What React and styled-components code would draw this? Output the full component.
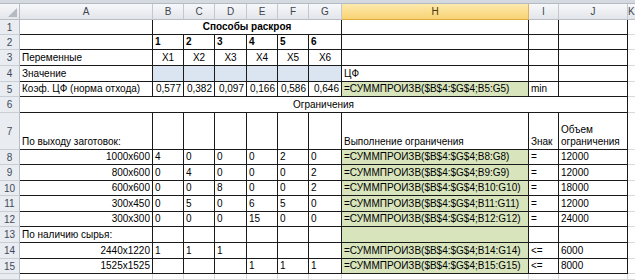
import React from 'react';
import styled, { createGlobalStyle, css } from 'styled-components';

const GlobalStyle = createGlobalStyle`
  html, body { margin: 0; padding: 0; background: #fff; }
  body {
    font-family: "Liberation Sans", Arial, sans-serif;
    font-size: 10px;
    color: #000;
    overflow: hidden;
  }
`;

// column widths (A..J) and row heights (1..15), measured off the sheet
const COLS = [133, 31, 31, 32, 31, 31, 33, 187, 30, 69];
const ROWS = [15, 15, 16, 16, 15, 16, 37, 15, 16, 15, 16, 15, 16, 16, 15];
const LETTERS = ['A', 'B', 'C', 'D', 'E', 'F', 'G', 'H', 'I', 'J', 'K'];

const Window = styled.div`
  width: 635px;
  height: 280px;
  overflow: hidden;
  display: flex;
  flex-direction: column;
  background: #fff;
`;

const TopStrip = styled.div`
  flex: none;
  height: 3px;
  background: #d5dae1;
  border-bottom: 1px solid #b4bac3;
`;

const Sheet = styled.div`
  flex: 1;
  display: grid;
  grid-template-columns: 20px ${COLS.map(w => w + 'px').join(' ')} 1fr;
  grid-template-rows: 16px ${ROWS.map(h => h + 'px').join(' ')} 1fr;
`;

const Corner = styled.div`
  box-sizing: border-box;
  background: linear-gradient(#f6f7f9, #e3e6eb);
  border-right: 1px solid #b9bec6;
  border-bottom: 1px solid #b9bec6;
  display: flex;
  align-items: flex-end;
  justify-content: flex-end;
  padding: 2px;
  &::after {
    content: '';
    width: 0;
    height: 0;
    border-left: 9px solid transparent;
    border-bottom: 9px solid #b5bac1;
  }
`;

const ColHead = styled.div`
  box-sizing: border-box;
  display: flex;
  align-items: center;
  justify-content: center;
  font-size: 10px;
  color: #3f4650;
  background: linear-gradient(#f7f8fa, #e2e5ea);
  border-right: 1px solid #c3c8cf;
  border-bottom: 1px solid #b9bec6;
  ${p => p.$active && css`
    color: #4a3b10;
    background: linear-gradient(#fde9ad, #f8d374);
    border-right-color: #e2b456;
    border-bottom-color: #e0a840;
  `}
`;

const RowHead = styled.div`
  box-sizing: border-box;
  display: flex;
  align-items: center;
  justify-content: center;
  font-size: 10px;
  color: #3f4a5a;
  background: #e9ecf0;
  border-right: 1px solid #b9bec6;
  border-bottom: 1px solid #c9ced5;
`;

const Cell = styled.div`
  box-sizing: border-box;
  display: flex;
  align-items: flex-end;
  justify-content: ${p => ({ left: 'flex-start', center: 'center', right: 'flex-end' }[p.$align || 'left'])};
  grid-column: span ${p => p.$span || 1};
  padding: 0 2px 1px;
  line-height: 12px;
  white-space: ${p => (p.$wrap ? 'normal' : 'nowrap')};
  overflow: hidden;
  font-weight: ${p => (p.$bold ? 700 : 400)};
  background: ${p => p.$fill || '#fff'};
  border-right: 1px solid ${p => (p.$line ? '#1a1a1a' : '#d9d9d9')};
  border-bottom: 1px solid ${p => (p.$line ? '#1a1a1a' : '#d9d9d9')};
`;

const BLUE = '#dbe5f1';
const GREEN = '#d7e4bc';

const c = (text = '', opts = {}) => ({ text, ...opts });
const blanks = n => Array.from({ length: n }, () => c());
const sumprod = r => `=СУММПРОИЗВ($B$4:$G$4;B${r}:G${r})`;

const outputRows = [
  ['1000x600', ['4', '0', '0', '0', '2', '0'], '=', '12000'],
  ['800x600', ['0', '4', '0', '0', '0', '2'], '=', '12000'],
  ['600x600', ['0', '0', '8', '0', '0', '2'], '=', '18000'],
  ['300x450', ['0', '5', '0', '6', '5', '0'], '=', '12000'],
  ['300x300', ['0', '0', '0', '15', '0', '0'], '=', '24000'],
];

const buildRows = () => {
  const rows = [];
  rows.push([c(), c('Способы раскроя', { span: 6, bold: true, align: 'center' }), ...blanks(3)]);
  rows.push([c(), ...['1', '2', '3', '4', '5', '6'].map(n => c(n, { bold: true })), ...blanks(3)]);
  rows.push([c('Переменные'), ...[1, 2, 3, 4, 5, 6].map(n => c('X' + n, { align: 'center' })), ...blanks(3)]);
  rows.push([c('Значение'), ...Array.from({ length: 6 }, () => c('', { fill: BLUE })), c('ЦФ'), ...blanks(2)]);
  rows.push([
    c('Коэф. ЦФ (норма отхода)'),
    ...['0,577', '0,382', '0,097', '0,166', '0,586', '0,646'].map(v => c(v, { align: 'right' })),
    c('=СУММПРОИЗВ($B$4:$G$4;B5:G5)', { fill: GREEN }),
    c('min'),
    c(),
  ]);
  rows.push([c('Ограничения', { span: 10, align: 'center' })]);
  rows.push([
    c('По выходу заготовок:'),
    ...blanks(6),
    c('Выполнение ограничения'),
    c('Знак'),
    c('Объем ограничения', { wrap: true }),
  ]);
  outputRows.forEach(([size, vals, sign, vol], i) => {
    rows.push([
      c(size, { align: 'right' }),
      ...vals.map(v => c(v)),
      c(sumprod(8 + i), { fill: GREEN }),
      c(sign),
      c(vol),
    ]);
  });
  rows.push([c('По наличию сырья:'), ...blanks(6), c('', { fill: GREEN }), ...blanks(2)]);
  rows.push([c('2440x1220', { align: 'right' }), c('1'), c('1'), c('1'), ...blanks(3), c(sumprod(14), { fill: GREEN }), c('<='), c('6000')]);
  rows.push([c('1525x1525', { align: 'right' }), ...blanks(3), c('1'), c('1'), c('1'), c(sumprod(15), { fill: GREEN }), c('<='), c('8000')]);
  return rows;
};

const App = () => {
  const rows = buildRows();
  return (
    <>
      <GlobalStyle />
      <Window>
        <TopStrip />
        <Sheet>
          <Corner />
          {LETTERS.map(l => (
            <ColHead key={l} $active={l === 'H'}>{l}</ColHead>
          ))}

          {rows.map((cells, r) => (
            <React.Fragment key={r}>
              <RowHead>{r + 1}</RowHead>
              {cells.map((cell, i) => (
                <Cell
                  key={i}
                  $line
                  $span={cell.span}
                  $align={cell.align}
                  $bold={cell.bold}
                  $fill={cell.fill}
                  $wrap={cell.wrap}
                >
                  {cell.text}
                </Cell>
              ))}
              <Cell />
            </React.Fragment>
          ))}

          {/* row 16 only peeks in at the bottom edge */}
          <RowHead />
          {LETTERS.map(l => <Cell key={l} />)}
        </Sheet>
      </Window>
    </>
  );
};

export default App;
